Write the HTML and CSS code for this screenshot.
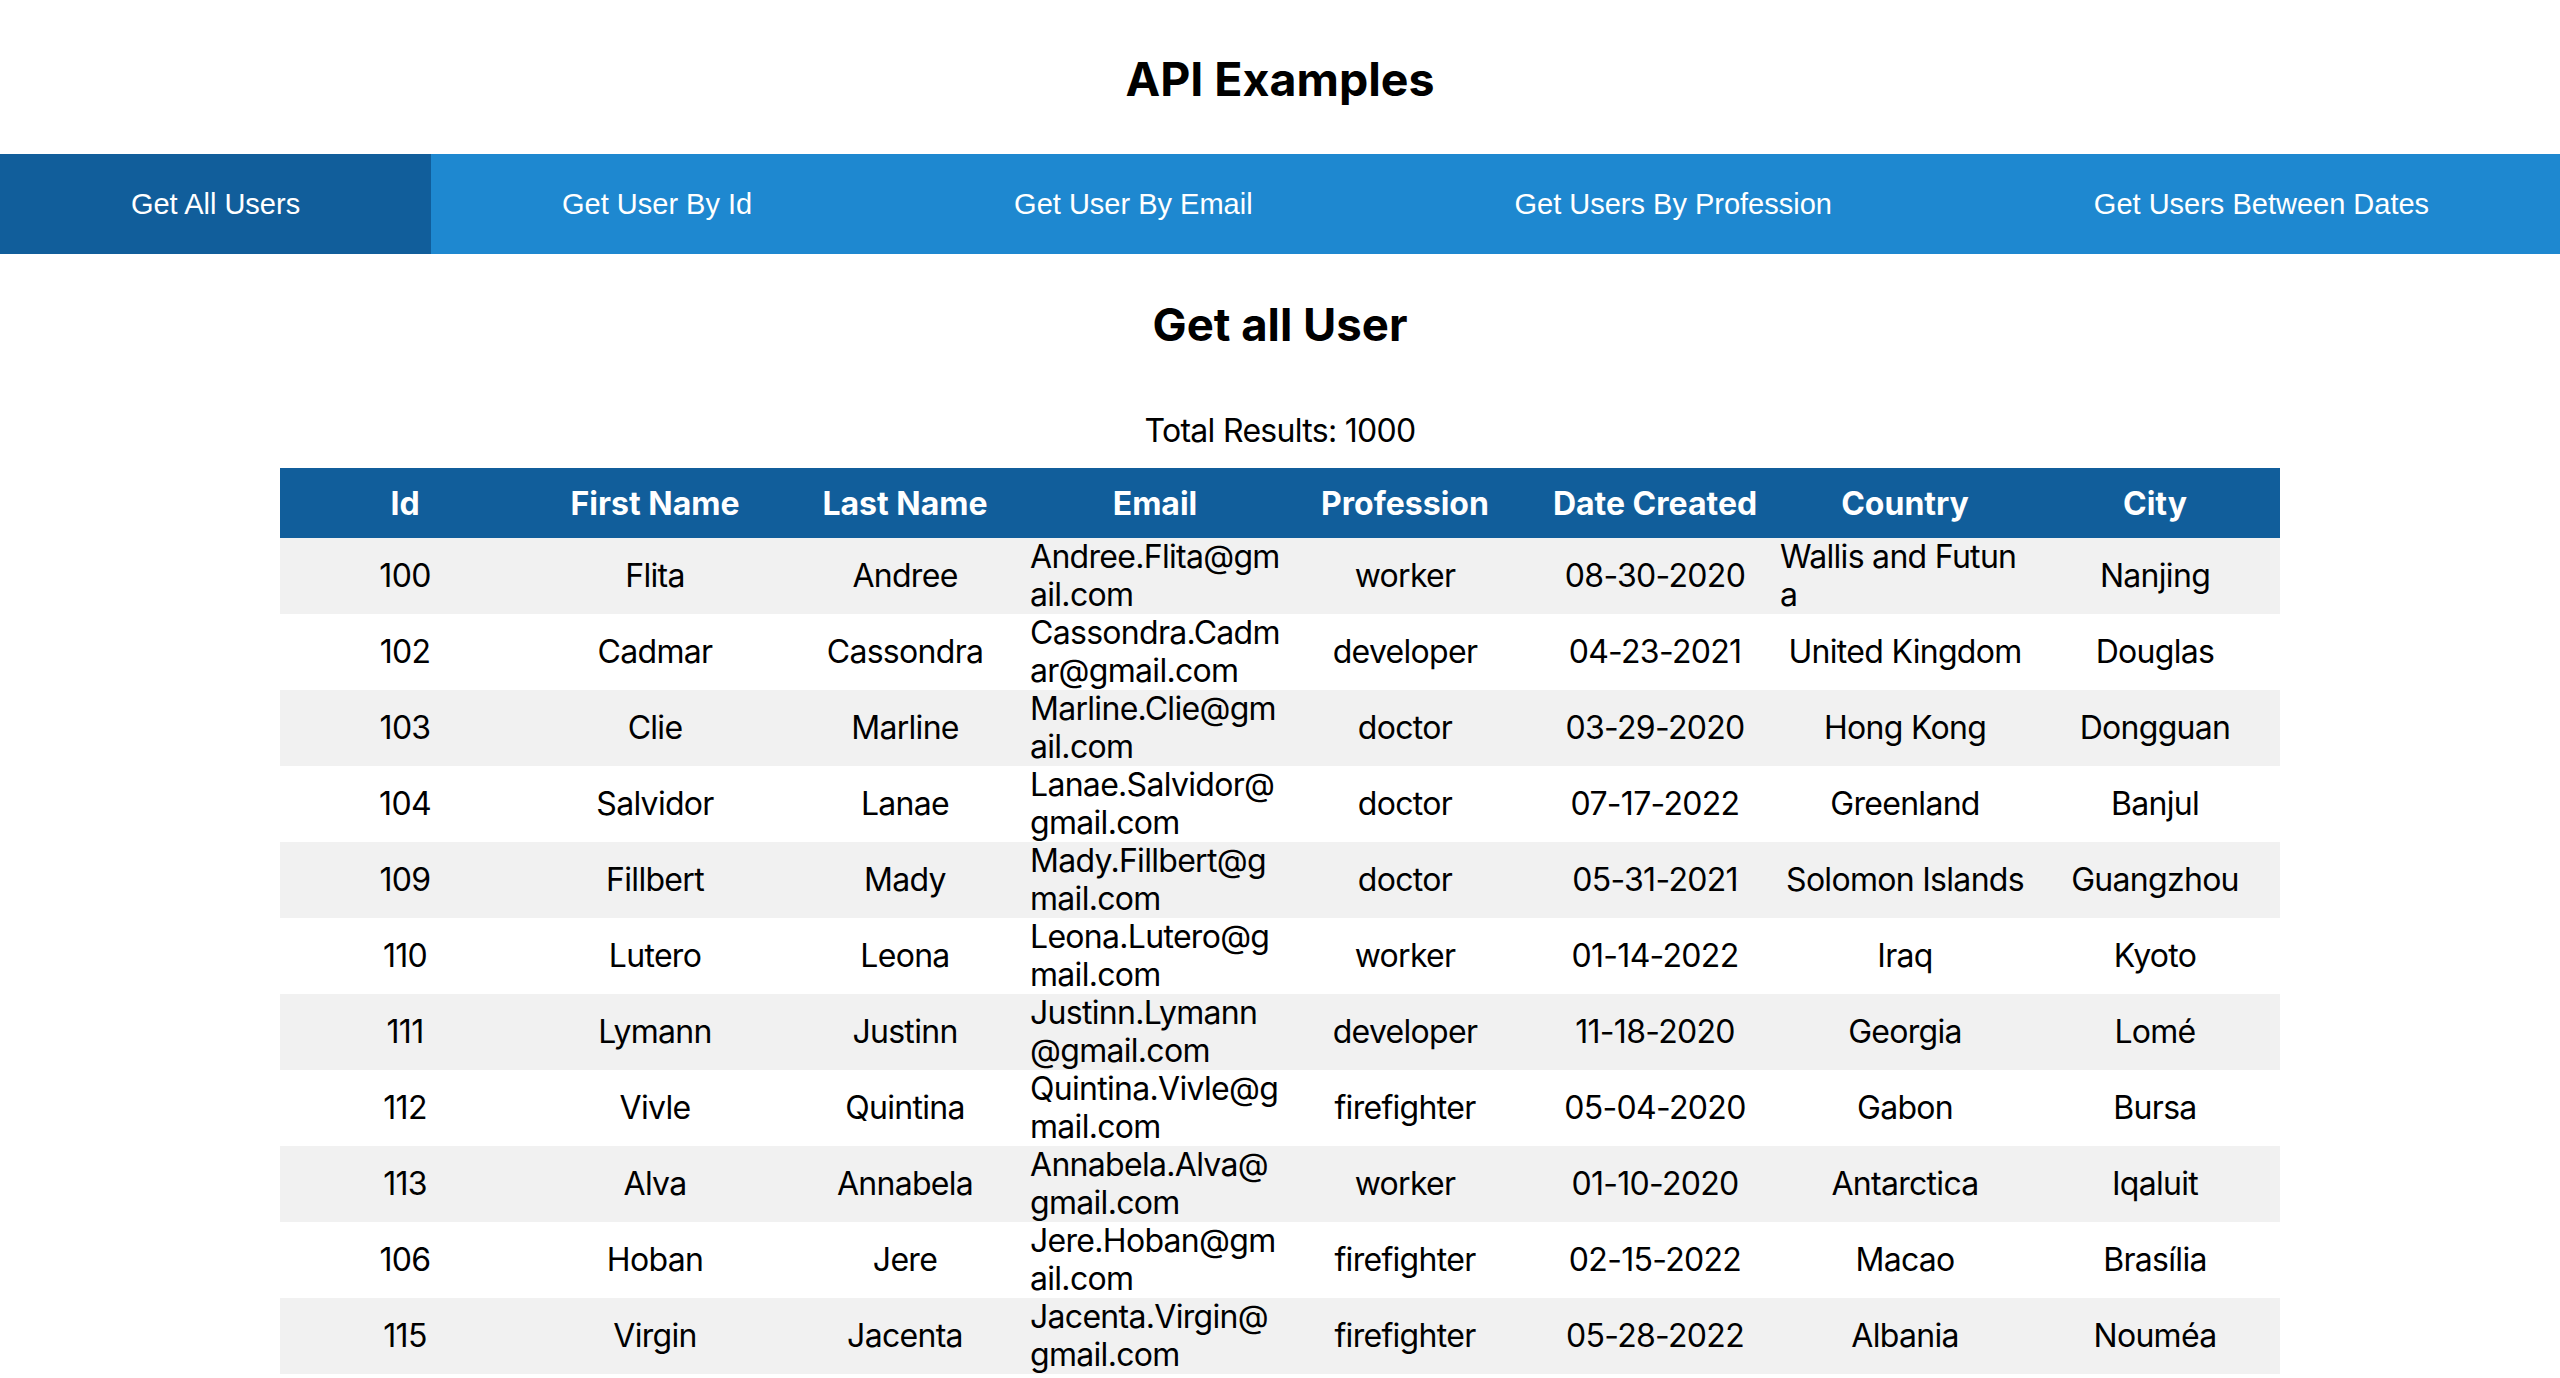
FILE: index.html
```html
<!DOCTYPE html>
<html lang="en">
<head>
<meta charset="utf-8">
<title>API Examples</title>
<link rel="stylesheet" href="styles.css">
</head>
<body>
<header class="page-header">
  <h1 class="page-title">API Examples</h1>
</header>
<nav class="tabs">
  <button class="tab active">Get All Users</button>
  <button class="tab">Get User By Id</button>
  <button class="tab">Get User By Email</button>
  <button class="tab">Get Users By Profession</button>
  <button class="tab">Get Users Between Dates</button>
</nav>
<main class="content">
  <h2 class="section-title">Get all User</h2>
  <p class="total">Total Results: 1000</p>
  <table class="users">
    <thead>
      <tr><th>Id</th><th>First Name</th><th>Last Name</th><th>Email</th><th>Profession</th><th>Date Created</th><th>Country</th><th>City</th></tr>
    </thead>
    <tbody>
      <tr><td><div class="cell">100</div></td><td><div class="cell">Flita</div></td><td><div class="cell">Andree</div></td><td><div class="cell">Andree.Flita@gmail.com</div></td><td><div class="cell">worker</div></td><td><div class="cell">08-30-2020</div></td><td><div class="cell">Wallis and Futuna</div></td><td><div class="cell">Nanjing</div></td></tr>
      <tr><td><div class="cell">102</div></td><td><div class="cell">Cadmar</div></td><td><div class="cell">Cassondra</div></td><td><div class="cell">Cassondra.Cadmar@gmail.com</div></td><td><div class="cell">developer</div></td><td><div class="cell">04-23-2021</div></td><td><div class="cell">United Kingdom</div></td><td><div class="cell">Douglas</div></td></tr>
      <tr><td><div class="cell">103</div></td><td><div class="cell">Clie</div></td><td><div class="cell">Marline</div></td><td><div class="cell">Marline.Clie@gmail.com</div></td><td><div class="cell">doctor</div></td><td><div class="cell">03-29-2020</div></td><td><div class="cell">Hong Kong</div></td><td><div class="cell">Dongguan</div></td></tr>
      <tr><td><div class="cell">104</div></td><td><div class="cell">Salvidor</div></td><td><div class="cell">Lanae</div></td><td><div class="cell">Lanae.Salvidor@gmail.com</div></td><td><div class="cell">doctor</div></td><td><div class="cell">07-17-2022</div></td><td><div class="cell">Greenland</div></td><td><div class="cell">Banjul</div></td></tr>
      <tr><td><div class="cell">109</div></td><td><div class="cell">Fillbert</div></td><td><div class="cell">Mady</div></td><td><div class="cell">Mady.Fillbert@gmail.com</div></td><td><div class="cell">doctor</div></td><td><div class="cell">05-31-2021</div></td><td><div class="cell">Solomon Islands</div></td><td><div class="cell">Guangzhou</div></td></tr>
      <tr><td><div class="cell">110</div></td><td><div class="cell">Lutero</div></td><td><div class="cell">Leona</div></td><td><div class="cell">Leona.Lutero@gmail.com</div></td><td><div class="cell">worker</div></td><td><div class="cell">01-14-2022</div></td><td><div class="cell">Iraq</div></td><td><div class="cell">Kyoto</div></td></tr>
      <tr><td><div class="cell">111</div></td><td><div class="cell">Lymann</div></td><td><div class="cell">Justinn</div></td><td><div class="cell">Justinn.Lymann@gmail.com</div></td><td><div class="cell">developer</div></td><td><div class="cell">11-18-2020</div></td><td><div class="cell">Georgia</div></td><td><div class="cell">Lomé</div></td></tr>
      <tr><td><div class="cell">112</div></td><td><div class="cell">Vivle</div></td><td><div class="cell">Quintina</div></td><td><div class="cell">Quintina.Vivle@gmail.com</div></td><td><div class="cell">firefighter</div></td><td><div class="cell">05-04-2020</div></td><td><div class="cell">Gabon</div></td><td><div class="cell">Bursa</div></td></tr>
      <tr><td><div class="cell">113</div></td><td><div class="cell">Alva</div></td><td><div class="cell">Annabela</div></td><td><div class="cell">Annabela.Alva@gmail.com</div></td><td><div class="cell">worker</div></td><td><div class="cell">01-10-2020</div></td><td><div class="cell">Antarctica</div></td><td><div class="cell">Iqaluit</div></td></tr>
      <tr><td><div class="cell">106</div></td><td><div class="cell">Hoban</div></td><td><div class="cell">Jere</div></td><td><div class="cell">Jere.Hoban@gmail.com</div></td><td><div class="cell">firefighter</div></td><td><div class="cell">02-15-2022</div></td><td><div class="cell">Macao</div></td><td><div class="cell">Brasília</div></td></tr>
      <tr><td><div class="cell">115</div></td><td><div class="cell">Virgin</div></td><td><div class="cell">Jacenta</div></td><td><div class="cell">Jacenta.Virgin@gmail.com</div></td><td><div class="cell">firefighter</div></td><td><div class="cell">05-28-2022</div></td><td><div class="cell">Albania</div></td><td><div class="cell">Nouméa</div></td></tr>
    </tbody>
  </table>
</main>
</body>
</html>
```

FILE: styles.css
```css
* { box-sizing: border-box; }

body {
  margin: 0;
  font-family: Inter, "Noto Sans", sans-serif;
  font-size: 32px;
  color: #000;
  background: #fff;
}

.page-header {
  height: 154px;
  padding-top: 4px;
  display: flex;
  align-items: center;
  justify-content: center;
}

.page-title {
  margin: 0;
  font-size: 46.5px;
  font-weight: 700;
  line-height: 58px;
}

.tabs {
  display: flex;
  height: 100px;
  background: #1e88d0;
}

.tab {
  flex: 1 1 auto;
  border: 0;
  margin: 0;
  padding: 0;
  background: #1e88d0;
  color: #fff;
  font-family: "Liberation Sans", Arial, sans-serif;
  font-size: 29px;
  cursor: pointer;
}

.tab.active {
  background: #115e9b;
}

.content {
  display: flex;
  flex-direction: column;
  align-items: center;
}

.section-title {
  margin: 42px 0 0;
  font-size: 45.5px;
  font-weight: 700;
  line-height: 58px;
}

.total {
  margin: 57px 0 0;
  line-height: 39px;
  letter-spacing: -0.7px;
}

.users {
  margin-top: 18px;
  width: 2000px;
  table-layout: fixed;
  border-collapse: collapse;
  border-spacing: 0;
}

.users th {
  height: 70px;
  padding: 0;
  background: #115e9b;
  color: #fff;
  font-weight: 700;
  text-align: center;
}

.users td {
  height: 76px;
  padding: 0;
  vertical-align: middle;
}

.users tbody tr:nth-child(odd) td {
  background: #f1f1f1;
}

.cell {
  display: flex;
  align-items: center;
  justify-content: center;
  word-break: break-all;
  line-height: 38px;
  letter-spacing: -0.7px;
}
```
